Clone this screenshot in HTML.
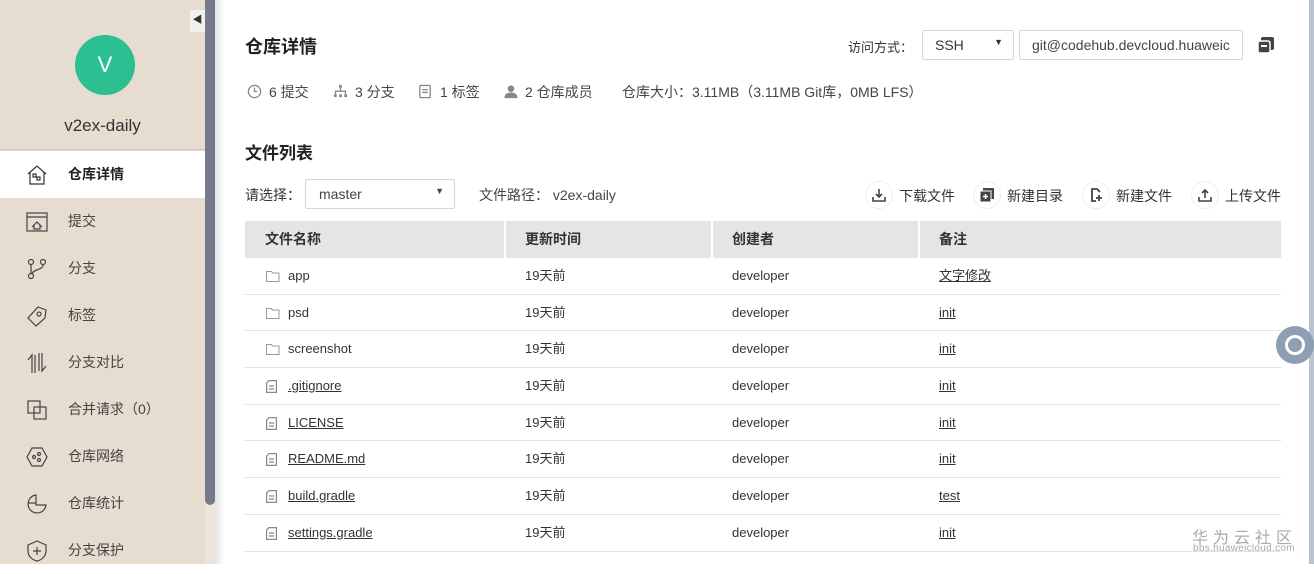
<!DOCTYPE html>
<html><head><meta charset="utf-8"><style>
*{margin:0;padding:0;box-sizing:border-box}
body{width:1314px;height:564px;overflow:hidden;background:#fff;font-family:"Liberation Sans","Noto Sans CJK SC",sans-serif;color:#333;position:relative}
.side{position:absolute;left:0;top:0;width:205px;height:564px;background:#e6dcd0}
.sb{position:absolute;left:205px;top:0;width:10px;height:505px;background:#777a8b;border-radius:0 0 5px 5px}
.sbt{position:absolute;left:205px;top:0;width:10px;height:564px;background:#ece5dc}
.shadow{position:absolute;left:215px;top:0;width:10px;height:564px;background:linear-gradient(90deg,#e4e4e6,#fff)}
.av{position:absolute;left:75px;top:35px;width:60px;height:60px;border-radius:50%;background:#2bbf92;color:#fff;font-size:22px;text-align:center;line-height:60px}
.nm{position:absolute;left:0;width:205px;top:116px;text-align:center;font-size:17px;color:#333}
.sep{position:absolute;left:0;top:149px;width:205px;height:1px;background:#cfc7bd}
.item{position:absolute;left:0;width:205px;height:47px;font-size:14px;color:#444}
.item span{position:absolute;left:68px;top:0;line-height:47px}
.item svg{position:absolute;left:25px;top:12px}
.act{background:#fff;font-weight:bold;color:#222}
.tog{position:absolute;left:190px;top:10px;width:15px;height:22px;background:#f3f0ec;font-size:10px;color:#333;text-align:center;line-height:22px}
.t{position:absolute;white-space:nowrap}
.box{position:absolute;border:1px solid #d7d7d7;border-radius:2px;background:#fff;font-size:14px}
.tbl{position:absolute;left:245px;top:221px;width:1036px}
.hd{height:37px;background:#e4e5e7;font-weight:bold;font-size:14px;position:relative}
.row{height:36.7px;border-bottom:1px solid #e2e2e2;position:relative;font-size:13px;color:#333}
.c{position:absolute;top:0;line-height:36px;height:36px}
.vl{position:absolute;top:0;width:2px;height:37px;background:#fff}
u{text-decoration:underline}
.btn{position:absolute;top:181px;width:28px;height:28px;border-radius:50%;border:1px solid #eee}
.fi{position:absolute;left:21px;top:12px}
</style></head><body>
<div class="side"></div>
<div class="sbt"></div><div class="sb"></div><div class="shadow"></div>
<div class="tog">◀</div>
<div class="av">V</div>
<div class="nm">v2ex-daily</div>
<div class="sep"></div>
<div class="item act" style="top:151px"><svg width="24" height="24" viewBox="0 0 24 24" fill="none" stroke="#333" stroke-width="1.2"><path d="M3 11L12 3l9 8M5 9v12h14V9"/><rect x="8" y="11" width="3" height="3"/><rect x="12" y="14" width="3" height="3"/></svg><span>仓库详情</span></div>
<div class="item" style="top:198px"><svg width="24" height="24" viewBox="0 0 24 24" fill="none" stroke="#444" stroke-width="1.2"><rect x="2" y="3" width="20" height="18"/><path d="M2 7h20M7 17l5-5 5 5M9 15v4h6v-4"/></svg><span>提交</span></div>
<div class="item" style="top:245px"><svg width="24" height="24" viewBox="0 0 24 24" fill="none" stroke="#444" stroke-width="1.2"><circle cx="6" cy="5" r="2.5"/><circle cx="6" cy="19" r="2.5"/><circle cx="18" cy="5" r="2.5"/><path d="M6 8v8M18 8c0 5-10 4-11 9"/></svg><span>分支</span></div>
<div class="item" style="top:292px"><svg width="24" height="24" viewBox="0 0 24 24" fill="none" stroke="#444" stroke-width="1.2"><path d="M13 3l8 3-1 8-9 8-8-8z"/><circle cx="14" cy="10" r="2"/></svg><span>标签</span></div>
<div class="item" style="top:339px"><svg width="24" height="24" viewBox="0 0 24 24" fill="none" stroke="#444" stroke-width="1.2"><path d="M7 22V4L3 9M10 22V4M14 2v18M17 2v18l4-5"/></svg><span>分支对比</span></div>
<div class="item" style="top:386px"><svg width="24" height="24" viewBox="0 0 24 24" fill="none" stroke="#444" stroke-width="1.2"><rect x="3" y="3" width="12" height="12"/><rect x="9" y="9" width="12" height="12"/></svg><span>合并请求（0）</span></div>
<div class="item" style="top:433px"><svg width="24" height="24" viewBox="0 0 24 24" fill="none" stroke="#444" stroke-width="1.2"><path d="M7 3h10l5 9-5 9H7l-5-9z"/><circle cx="9" cy="12" r="1.5"/><circle cx="14" cy="9" r="1.5"/><circle cx="14" cy="15" r="1.5"/></svg><span>仓库网络</span></div>
<div class="item" style="top:480px"><svg width="24" height="24" viewBox="0 0 24 24" fill="none" stroke="#444" stroke-width="1.2"><path d="M11 3a9 9 0 1 0 10 10H11zM3 11h8V3"/></svg><span>仓库统计</span></div>
<div class="item" style="top:527px"><svg width="24" height="24" viewBox="0 0 24 24" fill="none" stroke="#444" stroke-width="1.2"><path d="M12 2l9 4v6c0 5-4 9-9 10-5-1-9-5-9-10V6z"/><path d="M12 8v8M8 12h8"/></svg><span>分支保护</span></div>

<div class="t" style="left:245px;top:33px;font-size:18px;font-weight:bold;color:#222">仓库详情</div>
<div class="t" style="left:848px;top:37px;font-size:13px">访问方式：</div>
<div class="box" style="left:922px;top:30px;width:92px;height:30px;padding:6px 12px">SSH<span style="position:absolute;right:10px;top:6px;font-size:9px">▼</span></div>
<div class="box" style="left:1019px;top:30px;width:224px;height:30px;padding:6px 12px;overflow:hidden;white-space:nowrap;color:#444">git@codehub.devcloud.huaweic</div>
<svg class="t" style="left:1256px;top:35px" width="20" height="20" viewBox="0 0 20 20"><rect x="5" y="2" width="13" height="13" rx="2" fill="#444"/><rect x="2" y="6" width="12" height="12" rx="2" fill="#444" stroke="#fff" stroke-width="1.5"/><rect x="5" y="10" width="6" height="2" fill="#fff"/></svg>

<svg class="t" style="left:247px;top:84px" width="15" height="15" viewBox="0 0 16 16" fill="none" stroke="#888" stroke-width="1.4"><circle cx="8" cy="8" r="6.5"/><path d="M8 4v4h3"/></svg>
<div class="t" style="left:269px;top:82px;font-size:14px;color:#444">6 提交</div>
<svg class="t" style="left:333px;top:84px" width="15" height="15" viewBox="0 0 16 16" fill="#888"><rect x="6.5" y="1" width="3" height="3"/><rect x="7.3" y="4" width="1.4" height="4"/><rect x="2" y="7" width="12" height="1.4"/><rect x="2" y="7" width="1.4" height="4"/><rect x="12.6" y="7" width="1.4" height="4"/><rect x="1" y="11" width="3" height="3"/><rect x="6.5" y="11" width="3" height="3"/><rect x="12" y="11" width="3" height="3"/></svg>
<div class="t" style="left:355px;top:82px;font-size:14px;color:#444">3 分支</div>
<svg class="t" style="left:418px;top:84px" width="14" height="15" viewBox="0 0 14 16" fill="none" stroke="#888" stroke-width="1.4"><rect x="1.5" y="1.5" width="11" height="13" rx="1"/><path d="M4 6h6M4 9h6"/></svg>
<div class="t" style="left:440px;top:82px;font-size:14px;color:#444">1 标签</div>
<svg class="t" style="left:503px;top:84px" width="16" height="15" viewBox="0 0 16 16" fill="#888"><circle cx="8" cy="5" r="3.5"/><path d="M1 15c0-4 3-6 7-6s7 2 7 6z"/></svg>
<div class="t" style="left:525px;top:82px;font-size:14px;color:#444">2 仓库成员</div>
<div class="t" style="left:622px;top:82px;font-size:14px;color:#444">仓库大小：3.11MB（3.11MB Git库，0MB LFS）</div>

<div class="t" style="left:245px;top:139px;font-size:17px;font-weight:bold;color:#222">文件列表</div>
<div class="t" style="left:245px;top:185px;font-size:14px">请选择：</div>
<div class="box" style="left:305px;top:179px;width:150px;height:30px;padding:6px 13px;color:#444">master<span style="position:absolute;right:10px;top:6px;font-size:9px">▼</span></div>
<div class="t" style="left:479px;top:185px;font-size:14px;color:#444">文件路径：  v2ex-daily</div>

<div class="btn" style="left:865px"></div><svg class="t" style="left:872px;top:188px" width="14" height="14" viewBox="0 0 14 14" fill="none" stroke="#444" stroke-width="1.6"><path d="M7 1v8M4 6l3 3 3-3M1 9v4h12V9"/></svg><div class="t" style="left:899px;top:186px;font-size:14px">下载文件</div>
<div class="btn" style="left:973px"></div><svg class="t" style="left:980px;top:188px" width="14" height="14" viewBox="0 0 14 14"><rect x="3" y="0" width="11" height="11" fill="#444"/><rect x="0" y="3" width="11" height="11" fill="#444" stroke="#fff"/><path d="M5.5 6v5M3 8.5h5" stroke="#fff" stroke-width="1.5"/></svg><div class="t" style="left:1007px;top:186px;font-size:14px">新建目录</div>
<div class="btn" style="left:1082px"></div><svg class="t" style="left:1089px;top:188px" width="14" height="14" viewBox="0 0 14 14" fill="none" stroke="#444" stroke-width="1.8"><path d="M7 1H3v12h4M3 1h5l3 3"/><path d="M10 7v6M7 10h6"/></svg><div class="t" style="left:1116px;top:186px;font-size:14px">新建文件</div>
<div class="btn" style="left:1191px"></div><svg class="t" style="left:1198px;top:188px" width="14" height="14" viewBox="0 0 14 14" fill="none" stroke="#444" stroke-width="1.6"><path d="M7 10V2M4 5l3-3 3 3M1 9v4h12V9"/></svg><div class="t" style="left:1225px;top:186px;font-size:14px">上传文件</div>

<div class="tbl">
<div class="hd"><span class="c" style="left:20px;line-height:37px">文件名称</span><div class="vl" style="left:259px"></div><span class="c" style="left:280px;line-height:37px">更新时间</span><div class="vl" style="left:466px"></div><span class="c" style="left:487px;line-height:37px">创建者</span><div class="vl" style="left:673px"></div><span class="c" style="left:694px;line-height:37px">备注</span></div>
<div class="row"><svg class="fi" width="14" height="12" viewBox="0 0 14 12" fill="none" stroke="#999"><path d="M.5 1.5h5l1 1.5h6.5v8.5H.5z"/></svg><span class="c" style="left:43px">app</span><span class="c" style="left:280px">19天前</span><span class="c" style="left:487px">developer</span><span class="c" style="left:694px"><u>文字修改</u></span></div>
<div class="row"><svg class="fi" width="14" height="12" viewBox="0 0 14 12" fill="none" stroke="#999"><path d="M.5 1.5h5l1 1.5h6.5v8.5H.5z"/></svg><span class="c" style="left:43px">psd</span><span class="c" style="left:280px">19天前</span><span class="c" style="left:487px">developer</span><span class="c" style="left:694px"><u>init</u></span></div>
<div class="row"><svg class="fi" width="14" height="12" viewBox="0 0 14 12" fill="none" stroke="#999"><path d="M.5 1.5h5l1 1.5h6.5v8.5H.5z"/></svg><span class="c" style="left:43px">screenshot</span><span class="c" style="left:280px">19天前</span><span class="c" style="left:487px">developer</span><span class="c" style="left:694px"><u>init</u></span></div>
<div class="row"><svg class="fi" width="11" height="13" viewBox="0 0 11 13" fill="none" stroke="#888" stroke-width="1.2"><path d="M3 .6h7.4v11.8H.6V3zM3 6h5M3 9h5"/></svg><span class="c" style="left:43px"><u>.gitignore</u></span><span class="c" style="left:280px">19天前</span><span class="c" style="left:487px">developer</span><span class="c" style="left:694px"><u>init</u></span></div>
<div class="row"><svg class="fi" width="11" height="13" viewBox="0 0 11 13" fill="none" stroke="#888" stroke-width="1.2"><path d="M3 .6h7.4v11.8H.6V3zM3 6h5M3 9h5"/></svg><span class="c" style="left:43px"><u>LICENSE</u></span><span class="c" style="left:280px">19天前</span><span class="c" style="left:487px">developer</span><span class="c" style="left:694px"><u>init</u></span></div>
<div class="row"><svg class="fi" width="11" height="13" viewBox="0 0 11 13" fill="none" stroke="#888" stroke-width="1.2"><path d="M3 .6h7.4v11.8H.6V3zM3 6h5M3 9h5"/></svg><span class="c" style="left:43px"><u>README.md</u></span><span class="c" style="left:280px">19天前</span><span class="c" style="left:487px">developer</span><span class="c" style="left:694px"><u>init</u></span></div>
<div class="row"><svg class="fi" width="11" height="13" viewBox="0 0 11 13" fill="none" stroke="#888" stroke-width="1.2"><path d="M3 .6h7.4v11.8H.6V3zM3 6h5M3 9h5"/></svg><span class="c" style="left:43px"><u>build.gradle</u></span><span class="c" style="left:280px">19天前</span><span class="c" style="left:487px">developer</span><span class="c" style="left:694px"><u>test</u></span></div>
<div class="row"><svg class="fi" width="11" height="13" viewBox="0 0 11 13" fill="none" stroke="#888" stroke-width="1.2"><path d="M3 .6h7.4v11.8H.6V3zM3 6h5M3 9h5"/></svg><span class="c" style="left:43px"><u>settings.gradle</u></span><span class="c" style="left:280px">19天前</span><span class="c" style="left:487px">developer</span><span class="c" style="left:694px"><u>init</u></span></div>
</div>

<div style="position:absolute;left:1309px;top:0;width:5px;height:564px;background:#b9c4cf"></div>
<div style="position:absolute;left:1276px;top:326px;width:38px;height:38px;border-radius:50%;background:#8e9eb3"><div style="position:absolute;left:9px;top:9px;width:20px;height:20px;border:3px solid #fff;border-radius:50%"></div></div>
<div class="t" style="left:1192px;top:524px;font-size:16px;color:#aaa;letter-spacing:5px">华为云社区</div>
<div class="t" style="left:1193px;top:543px;font-size:10px;color:#aaa;letter-spacing:0.3px">bbs.huaweicloud.com</div>
</body></html>
